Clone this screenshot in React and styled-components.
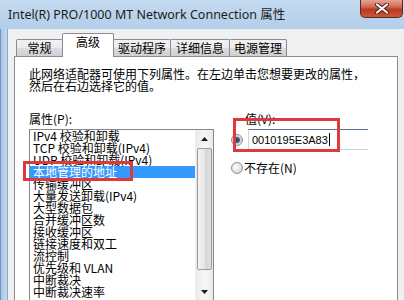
import React from "react";
import styled, { createGlobalStyle } from "styled-components";

const GlobalStyle = createGlobalStyle`
  html, body {
    margin: 0;
    padding: 0;
    width: 404px;
    height: 300px;
    overflow: hidden;
    background: #f0f0f0;
  }
  body {
    font-family: "Noto Sans CJK SC", sans-serif;
  }
`;

const items = [
  "IPv4 校验和卸载",
  "TCP 校验和卸载(IPv4)",
  "UDP 校验和卸载(IPv4)",
  "本地管理的地址",
  "传输缓冲区",
  "大量发送卸载(IPv4)",
  "大型数据包",
  "合并缓冲区数",
  "接收缓冲区",
  "链接速度和双工",
  "流控制",
  "优先级和 VLAN",
  "中断裁决",
  "中断裁决速率",
];

const tabs = [
  { label: "常规", width: 47 },
  { label: "高级", width: 52, active: true },
  { label: "驱动程序", width: 58 },
  { label: "详细信息", width: 60 },
  { label: "电源管理", width: 58 },
];

const App = () => {
  return (
    <>
      <GlobalStyle />
      <Window>
        <TitleBar>
          <Title>Intel(R) PRO/1000 MT Network Connection 属性</Title>
          <CloseButton>
            <svg width="14" height="11" viewBox="0 0 14 11">
              <path d="M2 1.5 L12 9.5 M12 1.5 L2 9.5" stroke="#4a1c14" strokeWidth="4" strokeLinecap="round" />
              <path d="M2 1.5 L12 9.5 M12 1.5 L2 9.5" stroke="#ffffff" strokeWidth="2.2" strokeLinecap="round" />
            </svg>
          </CloseButton>
        </TitleBar>
        <Body>
          <Frame />
          <Client>
            <TabStrip>
              {tabs.map((t) => (
                <Tab key={t.label} width={t.width} active={t.active}>
                  {t.label}
                </Tab>
              ))}
            </TabStrip>
            <Panel>
              <Description>
                <span>此网络适配器可使用下列属性。在左边单击您想要更改的属性，</span>
                <span>然后在右边选择它的值。</span>
              </Description>
              <Columns>
                <div>
                  <FieldLabel>属性(P):</FieldLabel>
                  <ListBox>
                    <Items>
                      {items.map((it, i) => (
                        <Item key={it} selected={i === 3}>
                          {it}
                        </Item>
                      ))}
                    </Items>
                    <ScrollBar>
                      <ArrowButton>
                        <svg width="7" height="4" viewBox="0 0 7 4">
                          <path d="M0 4 L3.5 0 L7 4 Z" fill="#1a1a1a" />
                        </svg>
                      </ArrowButton>
                      <Thumb />
                      <ArrowButton>
                        <svg width="7" height="4" viewBox="0 0 7 4">
                          <path d="M0 0 L3.5 4 L7 0 Z" fill="#1a1a1a" />
                        </svg>
                      </ArrowButton>
                    </ScrollBar>
                  </ListBox>
                </div>
                <ValueColumn>
                  <ValueLabel>值(V):</ValueLabel>
                  <ValueRow>
                    <Radio checked />
                    <TextBox>
                      0010195E3A83<Caret />
                    </TextBox>
                  </ValueRow>
                  <NoneRow>
                    <Radio />
                    <span>不存在(N)</span>
                  </NoneRow>
                </ValueColumn>
              </Columns>
              <Mark left={8} top={104} width={110} height={20} />
              <Mark left={218} top={61} width={107} height={34} />
            </Panel>
          </Client>
        </Body>
      </Window>
    </>
  );
};

const Window = styled.div`
  width: 404px;
  height: 300px;
  display: flex;
  flex-direction: column;
  overflow: hidden;
  background: linear-gradient(180deg, #c3d9ef 0px, #b4cfea 28px, #a7c5e4 300px);
`;

const TitleBar = styled.div`
  height: 29px;
  flex: none;
  display: flex;
  justify-content: space-between;
  align-items: flex-start;
`;

const Title = styled.div`
  padding: 6px 0 0 8px;
  font-family: "Noto Sans", "Noto Sans CJK SC", sans-serif;
  font-size: 12.5px;
  line-height: 17px;
  color: #1c1c1c;
`;

const CloseButton = styled.div`
  width: 43px;
  height: 18px;
  margin-right: 1px;
  box-sizing: border-box;
  border: 1px solid #5d2a22;
  border-top: none;
  border-radius: 0 0 5px 5px;
  background: linear-gradient(180deg, #e4a595 0%, #d06a55 40%, #b93a20 55%, #cc5638 100%);
  display: flex;
  align-items: center;
  justify-content: center;
`;

const Body = styled.div`
  flex: 1;
  display: flex;
  min-height: 0;
`;

const Frame = styled.div`
  width: 8px;
  flex: none;
  box-sizing: border-box;
  border-left: 1px solid #6f93bb;
  border-right: 1px solid #8ea9c7;
  background: linear-gradient(90deg, #a9c7e6, #c4d9ee);
`;

const Client = styled.div`
  flex: 1;
  background: #f0f0f0;
  padding: 4px 6px 0 6px;
  display: flex;
  flex-direction: column;
`;

const TabStrip = styled.div`
  height: 23px;
  flex: none;
  display: flex;
  align-items: flex-end;
  padding-left: 2px;
  position: relative;
  z-index: 1;
`;

const Tab = styled.div`
  width: ${(p) => p.width}px;
  height: ${(p) => (p.active ? 24 : 17)}px;
  margin-left: ${(p) => (p.active ? -2 : 0)}px;
  margin-bottom: ${(p) => (p.active ? -1 : 0)}px;
  box-sizing: border-box;
  flex: none;
  border: 1px solid #898c95;
  border-bottom: none;
  border-radius: 2px 2px 0 0;
  background: ${(p) =>
    p.active ? "#ffffff" : "linear-gradient(180deg, #f2f2f2 0%, #ebebeb 50%, #dddddd 51%, #cfcfcf 100%)"};
  font-size: 12px;
  line-height: 14px;
  padding-top: 1px;
  text-align: center;
  color: #000;
  position: relative;
  z-index: ${(p) => (p.active ? 2 : 0)};
  & + & {
    margin-left: ${(p) => (p.active ? -2 : -1)}px;
  }
`;

const Panel = styled.div`
  flex: 1;
  position: relative;
  background: #ffffff;
  border: 1px solid #898c95;
  border-bottom: none;
  padding: 11px 0 0 14px;
`;

const Description = styled.div`
  display: flex;
  flex-direction: column;
  font-size: 12px;
  line-height: 12px;
  color: #000;
  white-space: nowrap;
`;

const Columns = styled.div`
  display: grid;
  grid-template-columns: 185px 1fr;
  column-gap: 17px;
  margin-top: 21px;
`;

const FieldLabel = styled.div`
  font-size: 12px;
  line-height: 12px;
  height: 12px;
  margin-bottom: 4px;
  color: #000;
`;

const ListBox = styled.div`
  width: 185px;
  height: 172px;
  box-sizing: border-box;
  border: 1px solid #828790;
  display: flex;
  background: #fff;
`;

const Items = styled.div`
  flex: 1;
  display: flex;
  flex-direction: column;
`;

const Item = styled.div`
  height: 12px;
  line-height: 12px;
  font-size: 12px;
  padding-left: 3px;
  white-space: nowrap;
  color: ${(p) => (p.selected ? "#fff" : "#000")};
  background: ${(p) => (p.selected ? "#3399ff" : "transparent")};
`;

const ScrollBar = styled.div`
  width: 17px;
  flex: none;
  display: flex;
  flex-direction: column;
  background: linear-gradient(90deg, #e9e9e9, #f5f5f5 40%, #f5f5f5 60%, #e9e9e9);
  border-left: 1px solid #efefef;
`;

const ArrowButton = styled.div`
  height: 17px;
  flex: none;
  display: flex;
  align-items: center;
  justify-content: center;
`;

const Thumb = styled.div`
  height: 122px;
  margin: 1px 1px 13px 1px;
  box-sizing: border-box;
  border: 1px solid #9b9b9b;
  border-radius: 2px;
  background: linear-gradient(90deg, #f3f3f3, #e6e6e6 50%, #d6d6d6 51%, #dedede);
`;

const ValueColumn = styled.div`
  display: flex;
  flex-direction: column;
`;

const ValueLabel = styled.div`
  font-size: 12px;
  line-height: 12px;
  height: 12px;
  margin: 0 0 4px 14px;
  color: #000;
`;

const ValueRow = styled.div`
  display: flex;
  align-items: center;
  gap: 5px;
  height: 21px;
`;

const Radio = styled.span`
  width: 12px;
  height: 12px;
  flex: none;
  box-sizing: border-box;
  border-radius: 50%;
  border: 1px solid #8f8f8f;
  background: ${(p) =>
    p.checked
      ? "radial-gradient(circle, #2b3b4c 0, #44607c 2.5px, #c9d1d9 3.5px, #eeeeee 6px)"
      : "radial-gradient(circle at 40% 40%, #ffffff, #d9d9d9 70%, #cfcfcf)"};
`;

const TextBox = styled.div`
  width: 120px;
  height: 21px;
  box-sizing: border-box;
  border: 1px solid #c6d6e6;
  border-top-color: #5b7490;
  border-right: none;
  padding: 0 0 0 3px;
  display: flex;
  align-items: center;
  font-family: "Liberation Sans", sans-serif;
  font-size: 11px;
  color: #000;
`;

const Caret = styled.span`
  display: inline-block;
  width: 1px;
  height: 13px;
  margin-left: 1px;
  background: #000;
`;

const NoneRow = styled.div`
  display: flex;
  align-items: center;
  gap: 1px;
  height: 14px;
  margin-top: 11px;
  font-size: 12px;
  line-height: 14px;
  color: #000;
`;

const Mark = styled.div`
  position: absolute;
  left: ${(p) => p.left}px;
  top: ${(p) => p.top}px;
  width: ${(p) => p.width}px;
  height: ${(p) => p.height}px;
  box-sizing: border-box;
  border: 3px solid #dc3b3e;
  pointer-events: none;
`;

export default App;
